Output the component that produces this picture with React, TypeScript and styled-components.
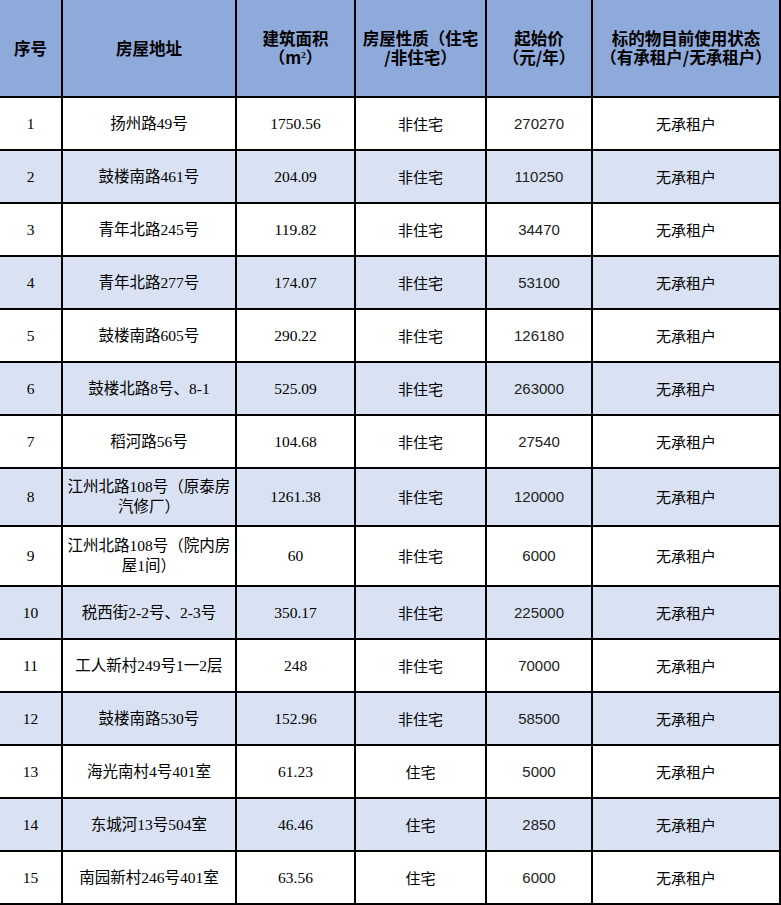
import React from "react";
import styled, { createGlobalStyle } from "styled-components";

const Global = createGlobalStyle`
  html, body { margin: 0; padding: 0; background: #ffffff; }
  #root { width: 781px; }
`;

const CJK = `"Noto Sans CJK SC", sans-serif`;
const SERIF = `"Liberation Serif", "Noto Sans CJK SC", serif`;
const SANS = `"Liberation Sans", "Noto Sans CJK SC", sans-serif`;

const Table = styled.div`
  display: grid;
  width: 781px;
  box-sizing: border-box;
  grid-template-columns: 61px 172px 117px 129px 104px 186px;
  grid-template-rows: 96px repeat(7, 51px) 56px 58px repeat(6, 51px);
  gap: 2px;
  padding: 0 2px 2px 0;
  background: #000000;
`;

const Row = styled.div`
  display: contents;
`;

type Face = "cjk" | "serif" | "sans";

const faces: Record<Face, string> = { cjk: CJK, serif: SERIF, sans: SANS };

const HeadCell = styled.div`
  display: flex;
  align-items: center;
  justify-content: center;
  text-align: center;
  background: #8eaadb;
  color: #000;
  font-family: ${CJK};
  font-weight: 700;
  font-size: 16.5px;
  line-height: 19px;
  sup {
    font-size: 9px;
    line-height: 0;
    vertical-align: 6px;
    font-family: ${SERIF};
  }
`;

const Text = styled.span`
  display: block;
`;

const Cell = styled.div<{ $alt: boolean; $face: Face }>`
  display: flex;
  align-items: center;
  justify-content: center;
  text-align: center;
  background: ${(p) => (p.$alt ? "#d9e2f3" : "#ffffff")};
  color: ${(p) => (p.$face === "sans" ? "#222222" : "#000000")};
  font-family: ${(p) => faces[p.$face]};
  font-size: ${(p) => (p.$face === "serif" ? "15.5px" : "15px")};
  line-height: 20px;
`;

type Item = {
  addr: React.ReactNode;
  area: string;
  kind: string;
  price: string;
};

const rows: Item[] = [
  { addr: "扬州路49号", area: "1750.56", kind: "非住宅", price: "270270" },
  { addr: "鼓楼南路461号", area: "204.09", kind: "非住宅", price: "110250" },
  { addr: "青年北路245号", area: "119.82", kind: "非住宅", price: "34470" },
  { addr: "青年北路277号", area: "174.07", kind: "非住宅", price: "53100" },
  { addr: "鼓楼南路605号", area: "290.22", kind: "非住宅", price: "126180" },
  { addr: "鼓楼北路8号、8-1", area: "525.09", kind: "非住宅", price: "263000" },
  { addr: "稻河路56号", area: "104.68", kind: "非住宅", price: "27540" },
  {
    addr: (
      <>
        江州北路108号（原泰房
        <br />
        汽修厂）
      </>
    ),
    area: "1261.38",
    kind: "非住宅",
    price: "120000",
  },
  {
    addr: (
      <>
        江州北路108号（院内房
        <br />
        屋1间）
      </>
    ),
    area: "60",
    kind: "非住宅",
    price: "6000",
  },
  { addr: "税西街2-2号、2-3号", area: "350.17", kind: "非住宅", price: "225000" },
  { addr: "工人新村249号1一2层", area: "248", kind: "非住宅", price: "70000" },
  { addr: "鼓楼南路530号", area: "152.96", kind: "非住宅", price: "58500" },
  { addr: "海光南村4号401室", area: "61.23", kind: "住宅", price: "5000" },
  { addr: "东城河13号504室", area: "46.46", kind: "住宅", price: "2850" },
  { addr: "南园新村246号401室", area: "63.56", kind: "住宅", price: "6000" },
];

export default function App() {
  return (
    <>
      <Global />
      <Table>
        <Row>
          <HeadCell>
            <Text>序号</Text>
          </HeadCell>
          <HeadCell>
            <Text>房屋地址</Text>
          </HeadCell>
          <HeadCell>
            <Text>
              建筑面积
              <br />
              （m<sup>2</sup>）
            </Text>
          </HeadCell>
          <HeadCell>
            <Text>
              房屋性质（住宅
              <br />
              /非住宅）
            </Text>
          </HeadCell>
          <HeadCell>
            <Text>
              起始价
              <br />
              （元/年）
            </Text>
          </HeadCell>
          <HeadCell>
            <Text>
              标的物目前使用状态
              <br />
              （有承租户/无承租户）
            </Text>
          </HeadCell>
        </Row>
        {rows.map((r, i) => {
          const alt = i % 2 === 1;
          return (
            <Row key={i}>
              <Cell $alt={alt} $face="serif">
                <Text>{i + 1}</Text>
              </Cell>
              <Cell $alt={alt} $face="serif">
                <Text>{r.addr}</Text>
              </Cell>
              <Cell $alt={alt} $face="serif">
                <Text>{r.area}</Text>
              </Cell>
              <Cell $alt={alt} $face="cjk">
                <Text>{r.kind}</Text>
              </Cell>
              <Cell $alt={alt} $face="sans">
                <Text>{r.price}</Text>
              </Cell>
              <Cell $alt={alt} $face="cjk">
                <Text>无承租户</Text>
              </Cell>
            </Row>
          );
        })}
      </Table>
    </>
  );
}
